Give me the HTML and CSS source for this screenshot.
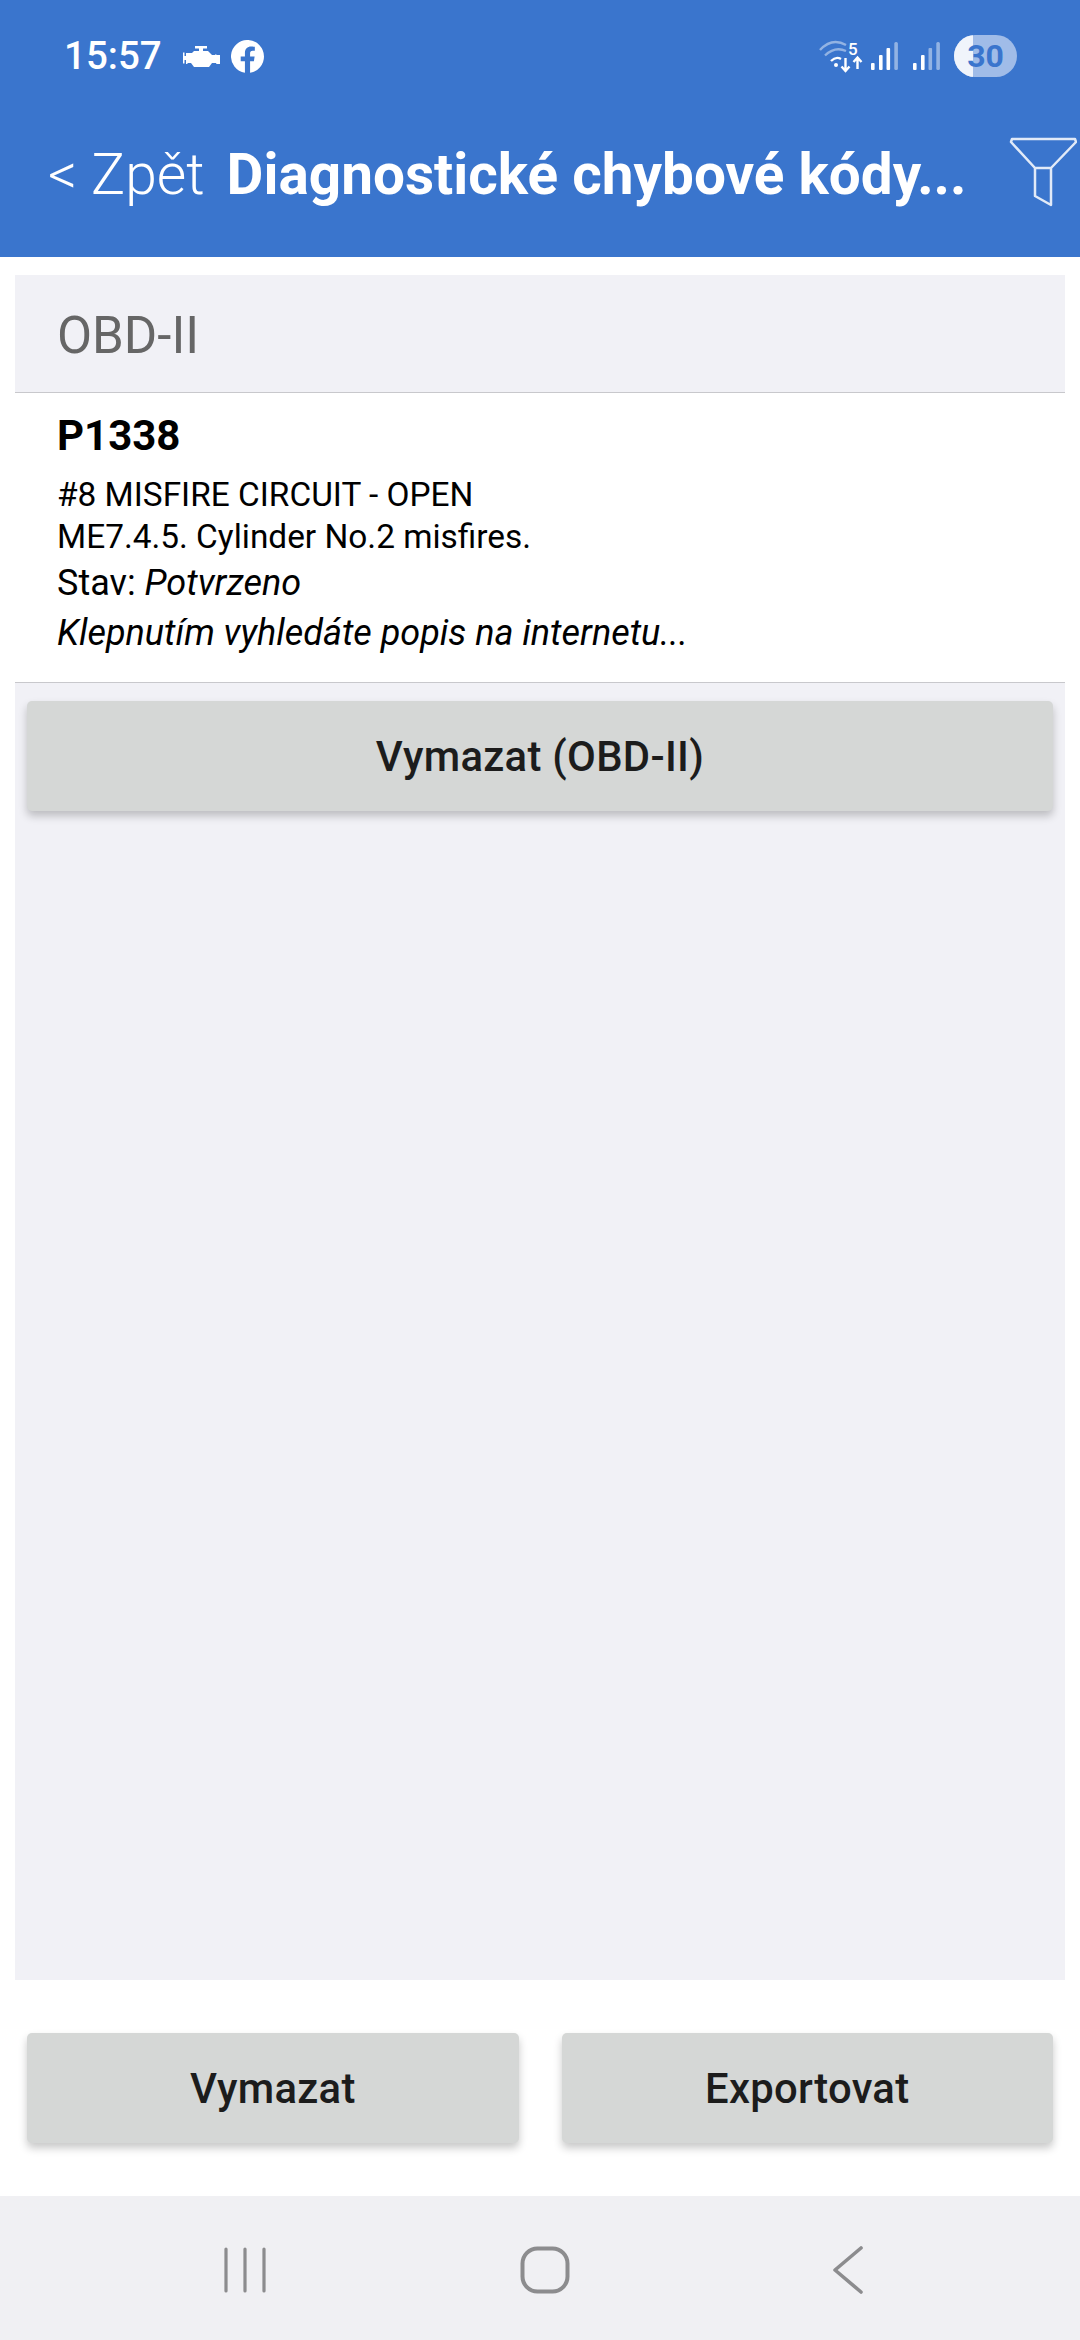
FILE: index.html
```html
<!DOCTYPE html>
<html lang="cs">
<head>
<meta charset="utf-8">
<title>Diagnostické chybové kódy</title>
<link rel="stylesheet" href="styles.css">
</head>
<body>
<div class="screen">
  <header class="header">
    <div class="status">
      <div class="status-left">
        <span class="time">15:57</span>
        <svg class="ic-engine" viewBox="0 0 37 21" width="37" height="21"><path fill="#fff" d="M12 0h12v2.500h-4V5h5l4 4h3V8.500h1.500V9H37v9h-3.500v-.5H33V17h-4l-3 4H11l-3-4H4.500v1H3v-4H1.500v3.500H0V6.500h1.500V10H3V7h6l2-2h5V2.500h-4z"/></svg>
        <svg class="ic-fb" viewBox="0 0 32 32" width="33" height="33"><path fill="#fff" d="M32 16a16 16 0 1 0-18.500 15.800V20.600H9.400V16h4.100v-3.500c0-4 2.400-6.200 6-6.200 1.800 0 3.600.3 3.600.3v3.900h-2c-2 0-2.600 1.200-2.600 2.500v3h4.400l-.7 4.600h-3.700v11.200A16 16 0 0 0 32 16z"/></svg>
      </div>
      <div class="status-right">
        <span class="wifi">
          <svg viewBox="0 0 44 34" width="44" height="34">
            <path fill="none" stroke="#fff" stroke-opacity=".45" stroke-width="2.400" d="M1 10Q13-3 27 5M6 15.500Q16 6 27 11"/>
            <path fill="none" stroke="#fff" stroke-width="2.400" d="M12 21Q17 16 22 19"/>
            <circle cx="17" cy="25" r="2" fill="#fff"/>
            <path fill="none" stroke="#fff" stroke-width="2.400" d="M26.500 18v13M22.500 26.500l4 4.500 4-4.500M38.500 29V18M34.500 22l4-4.500 4 4.500"/>
          </svg>
          <span class="wifi-num">5</span>
        </span>
        <svg class="bars" viewBox="0 0 28 28" width="28" height="28"><rect x="0" y="21" width="3.600" height="7" rx="1" fill="#fff"/><rect x="8" y="13" width="3.600" height="15" rx="1" fill="#fff"/><rect x="15.500" y="6" width="3.600" height="22" rx="1" fill="#fff"/><rect x="23.300" y="0" width="3.600" height="28" rx="1.500" fill="#fff" fill-opacity=".45"/></svg>
        <svg class="bars" viewBox="0 0 28 28" width="28" height="28"><rect x="0" y="21" width="3.600" height="7" rx="1" fill="#fff"/><rect x="8" y="13" width="3.600" height="15" rx="1" fill="#fff"/><rect x="15.500" y="6" width="3.600" height="22" rx="1" fill="#fff" fill-opacity=".45"/><rect x="23.300" y="0" width="3.600" height="28" rx="1.500" fill="#fff" fill-opacity=".45"/></svg>
        <span class="battery"><span class="battery-level"></span><span class="battery-num">30</span></span>
      </div>
    </div>
    <div class="toolbar">
      <span class="back">&lt; Zpět</span>
      <span class="title">Diagnostické chybové kódy...</span>
      <svg class="filter" viewBox="0 0 68 72" width="68" height="72"><path fill="none" stroke="#fff" stroke-opacity=".85" stroke-width="2.500" stroke-linejoin="round" d="M3 4h63l1 3-25 26H26L2 7zM26 33v28l16 9V33"/></svg>
    </div>
  </header>

  <main class="content">
    <section class="panel">
      <div class="panel-head">OBD-II</div>
      <div class="item">
        <div class="code">P1338</div>
        <div class="desc">#8 MISFIRE CIRCUIT - OPEN<br>ME7.4.5. Cylinder No.2 misfires.</div>
        <div class="state">Stav: <em>Potvrzeno</em></div>
        <div class="hint">Klepnutím vyhledáte popis na internetu...</div>
      </div>
      <div class="panel-action">
        <button class="btn">Vymazat (OBD-II)</button>
      </div>
    </section>
    <div class="actions">
      <button class="btn">Vymazat</button>
      <button class="btn">Exportovat</button>
    </div>
  </main>

  <nav class="navbar">
    <span class="nav-cell"><svg viewBox="0 0 42 46" width="42" height="46"><path fill="none" stroke="#8c8c8e" stroke-width="3.200" stroke-linecap="round" d="M2 2v42M21 2v42M40 2v42"/></svg></span>
    <span class="nav-cell"><svg viewBox="0 0 50 48" width="50" height="48"><rect x="2.500" y="2.500" width="45" height="43" rx="15" fill="none" stroke="#8c8c8e" stroke-width="4"/></svg></span>
    <span class="nav-cell"><svg viewBox="0 0 38 48" width="38" height="48"><path fill="none" stroke="#8c8c8e" stroke-width="3.600" stroke-linecap="round" stroke-linejoin="round" d="M35 2L9 24l26 22"/></svg></span>
  </nav>
</div>
</body>
</html>
```
FILE: styles.css
```css
* { box-sizing: border-box; }
html, body { margin: 0; padding: 0; }
body { font-family: Roboto, "Liberation Sans", sans-serif; background: #fff; }
.screen { width: 1080px; height: 2340px; display: flex; flex-direction: column; background: #fff; overflow: hidden; }

.header { height: 257px; background: #3a75cd; color: #fff; flex: none; }
.status { height: 112px; padding: 32px 63px 0 64px; display: flex; justify-content: space-between; align-items: flex-start; }
.status-left { display: flex; align-items: center; height: 48px; }
.time { font-size: 38.5px; font-weight: 500; line-height: 48px; }
.ic-engine { margin-left: 21px; }
.ic-fb { margin-left: 11px; }
.status-right { display: flex; align-items: center; height: 48px; }
.wifi { position: relative; width: 44px; height: 34px; margin-top: 2px; margin-right: 8px; display: block; }
.wifi svg { display: block; }
.wifi-num { position: absolute; left: 29px; top: -1px; font-size: 17px; font-weight: 500; line-height: 20px; }
.bars + .bars { margin-left: 14px; }
.battery { position: relative; margin-left: 13px; width: 63px; height: 42px; border-radius: 21px; background: #a0bce8; overflow: hidden; display: flex; align-items: center; justify-content: center; }
.battery-level { position: absolute; left: 0; top: 0; bottom: 0; width: 19px; background: #f0f4fb; }
.battery-num { position: relative; color: #3a75cd; font-size: 32px; font-weight: 700; line-height: 42px; }

.toolbar { height: 145px; padding-left: 48px; display: flex; align-items: flex-start; position: relative; }
.back { font-size: 57px; font-weight: 300; line-height: 62px; margin-top: 32px; white-space: nowrap; }
.title { font-size: 56.7px; font-weight: 700; line-height: 62px; margin-top: 32px; margin-left: 22px; white-space: nowrap; }
.filter { position: absolute; left: 1009px; top: 23px; }

.content { flex: 1; display: flex; flex-direction: column; padding: 18px 15px 0; }
.panel { height: 1705px; background: #f1f1f6; display: flex; flex-direction: column; flex: none; }
.panel-head { height: 118px; padding: 3px 0 0 42px; border-bottom: 1px solid #c8c8cc; font-size: 51px; line-height: 116px; color: #666; }
.item { height: 290px; background: #fff; border-bottom: 1px solid #c8c8cc; padding: 20px 42px 0; color: #000; }
.code { font-size: 42px; font-weight: 700; line-height: 46px; }
.desc { font-size: 33.4px; line-height: 41.5px; margin-top: 15px; }
.state { font-size: 36px; line-height: 42px; margin-top: 5px; }
.hint { font-size: 36px; font-style: italic; line-height: 44px; margin-top: 7px; }
.panel-action { padding: 18px 12px 0; display: flex; }
.btn { flex: 1; height: 110px; border: 0; border-radius: 5px; background: #d5d7d6; color: #1c1c1c; font-family: inherit; font-size: 41.8px; font-weight: 500; letter-spacing: .3px; box-shadow: 0 5px 8px rgba(0,0,0,.22); padding: 0; }
.actions { display: flex; gap: 43px; padding: 53px 12px 0; }
.navbar { height: 144px; background: #f0f0f3; flex: none; display: flex; align-items: center; justify-content: center; padding: 3px 0 0 10px; }
.nav-cell { width: 300px; display: flex; justify-content: center; }
```
